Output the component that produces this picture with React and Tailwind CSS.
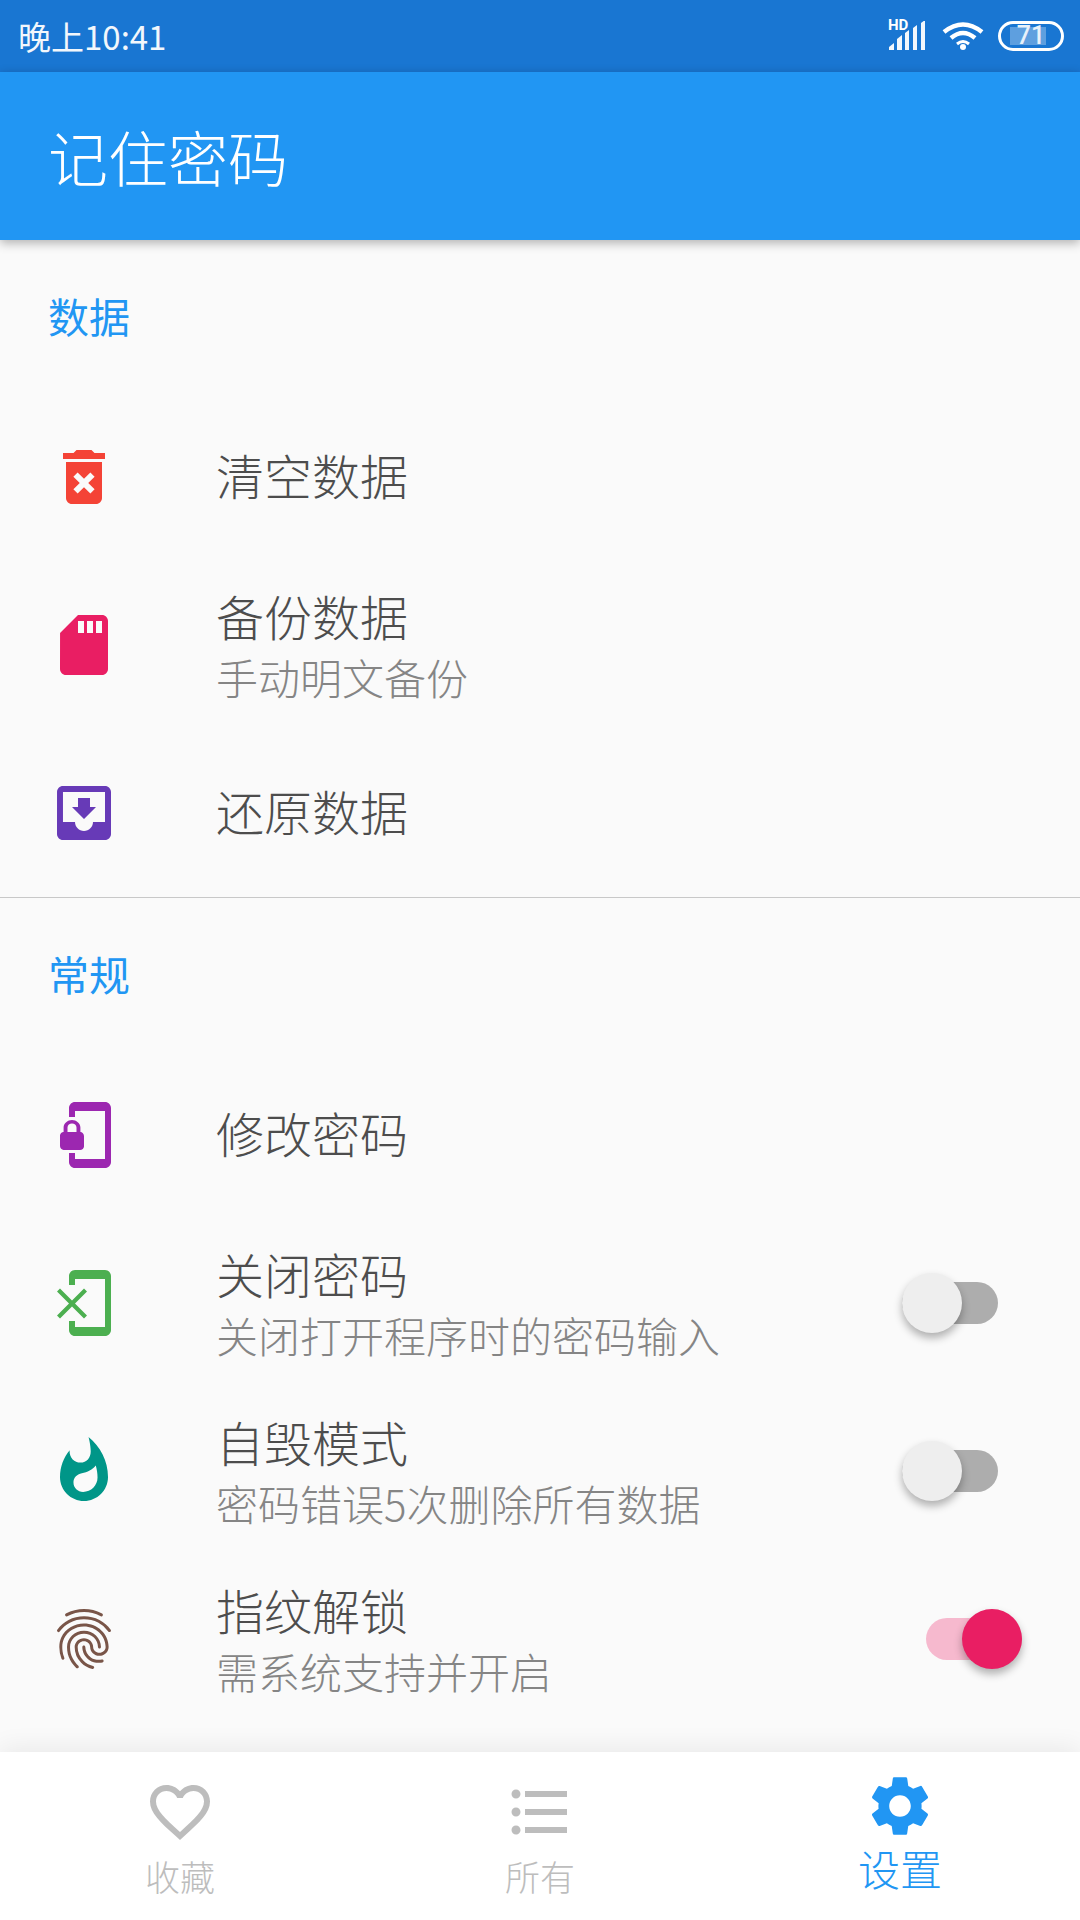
import {
  MdDeleteForever,
  MdFavoriteBorder,
  MdFingerprint,
  MdFormatListBulleted,
  MdMoveToInbox,
  MdPhonelinkErase,
  MdPhonelinkLock,
  MdSdStorage,
  MdSettings,
  MdWhatshot,
} from 'react-icons/md';

const cjk = "font-['Noto_Sans_CJK_SC',sans-serif]";

function StatusIcons() {
  return (
    <div className="flex items-center mr-[16px]">
      <div className="relative w-[40px] h-[30px] mr-[14px]">
        <span className="absolute left-0 top-[-4px] text-[15px] leading-[16px] font-bold text-white font-['Roboto',sans-serif]">HD</span>
        <svg width="40" height="30" viewBox="0 0 40 30" fill="#f2f7fc">
          <path d="M1 29v-3l5-4v7zM9 29V18l5-4v15zM17 29V12l4-3v20zM25 29V7l4-3v25zM33 29V2l4-3v30z" />
        </svg>
      </div>
      <svg width="42" height="28" viewBox="0 0 42 28" fill="none" stroke="#ffffff" strokeWidth="4.5" className="mr-[14px]">
        <path d="M2 10 Q21 -5 40 10" />
        <path d="M9 16 Q21 6 33 16" />
        <path d="M15 22 Q21 17 27 22" strokeWidth="3" />
        <circle cx="21" cy="25" r="3" fill="#ffffff" stroke="none" />
      </svg>
      <div className="relative w-[66px] h-[30px] rounded-full border-[3px] border-white overflow-hidden flex items-center justify-center">
        <div className="absolute left-[9px] top-[3px] bottom-[3px] w-[36px] bg-white/30" />
        <span className="relative text-[25px] leading-[24px] font-medium text-[#e8f1fa] font-['Roboto',sans-serif]">71</span>
      </div>
    </div>
  );
}

function Switch({ on }) {
  return (
    <div className={on ? 'relative w-[96px] h-[42px] rounded-full bg-[#f6b9ce] mr-[58px]' : 'relative w-[96px] h-[42px] rounded-full bg-[#adadad] mr-[82px]'}>
      <div
        className={
          on
            ? 'absolute top-[-9px] right-0 w-[60px] h-[60px] rounded-full bg-[#e91e63] shadow-[0_5px_8px_rgba(0,0,0,0.3)]'
            : 'absolute top-[-9px] left-0 w-[60px] h-[60px] rounded-full bg-[#eeeeee] shadow-[0_5px_8px_rgba(0,0,0,0.3)]'
        }
      />
    </div>
  );
}

function Row({ icon: Icon, color, title, sub, on }) {
  return (
    <div className="flex items-center h-[168px]">
      <Icon size={72} color={color} className="ml-[48px] shrink-0" />
      <div className={sub ? 'ml-[96px] flex-1 pt-[2px]' : 'ml-[96px] flex-1 pb-[6px]'}>
        <div className="text-[48px] font-light leading-[62px] text-[#4d4d4d]">{title}</div>
        {sub && <div className="text-[42px] font-light leading-[62px] text-[#858585]">{sub}</div>}
      </div>
      {on !== undefined && <Switch on={on} />}
    </div>
  );
}

function SectionTitle({ children }) {
  return <div className="h-[153px] pt-[49px] pl-[48px] text-[41px] leading-[52px] text-[#2196f3]">{children}</div>;
}

function NavItem({ icon: Icon, label, active }) {
  return (
    <div className="flex flex-col items-center">
      <Icon size={72} color={active ? '#2196f3' : '#bdbdbd'} className={active ? 'mt-[18px]' : 'mt-[24px]'} />
      <span className={active ? 'mt-[2px] text-[42px] font-light leading-[48px] text-[#2196f3]' : 'mt-[6px] text-[35px] font-light leading-[44px] text-[#bdbdbd]'}>
        {label}
      </span>
    </div>
  );
}

export default function App() {
  return (
    <div className={`${cjk} w-[1080px] h-[1920px] flex flex-col bg-[#fafafa] overflow-hidden`}>
      <div className="h-[72px] bg-[#1976d2] flex items-center justify-between shrink-0 relative z-10">
        <span className="ml-[18px] text-[33px] leading-[72px] text-[#f2f7fc]">晚上10:41</span>
        <StatusIcons />
      </div>
      <div className="h-[168px] bg-[#2196f3] flex items-center pl-[48px] shrink-0 shadow-[0_3px_10px_rgba(0,0,0,0.3)] relative z-10">
        <span className="text-[60px] font-light leading-[72px] text-white">记住密码</span>
      </div>

      <div className="flex-1">
        <SectionTitle>数据</SectionTitle>
        <Row icon={MdDeleteForever} color="#f44336" title="清空数据" />
        <Row icon={MdSdStorage} color="#e91e63" title="备份数据" sub="手动明文备份" />
        <Row icon={MdMoveToInbox} color="#673ab7" title="还原数据" />
        <div className="h-[1px] bg-[#c8c8c8]" />
        <SectionTitle>常规</SectionTitle>
        <Row icon={MdPhonelinkLock} color="#9c27b0" title="修改密码" />
        <Row icon={MdPhonelinkErase} color="#4caf50" title="关闭密码" sub="关闭打开程序时的密码输入" on={false} />
        <Row icon={MdWhatshot} color="#009688" title="自毁模式" sub="密码错误5次删除所有数据" on={false} />
        <Row icon={MdFingerprint} color="#795548" title="指纹解锁" sub="需系统支持并开启" on />
      </div>

      <div className="h-[168px] bg-white grid grid-cols-3 shrink-0 shadow-[0_-4px_24px_rgba(0,0,0,0.07)] relative z-10">
        <NavItem icon={MdFavoriteBorder} label="收藏" />
        <NavItem icon={MdFormatListBulleted} label="所有" />
        <NavItem icon={MdSettings} label="设置" active />
      </div>
    </div>
  );
}
